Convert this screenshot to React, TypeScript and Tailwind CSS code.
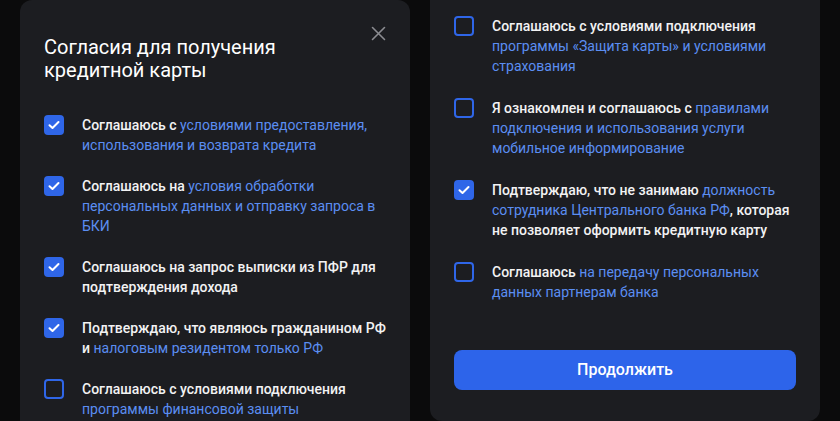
import React from 'react';

type Part = { t: string; link?: boolean };
type Item = { checked: boolean; parts: Part[] };

const leftItems: Item[] = [
  {
    checked: true,
    parts: [
      { t: 'Соглашаюсь с ' },
      { t: 'условиями предоставления, использования и возврата кредита', link: true },
    ],
  },
  {
    checked: true,
    parts: [
      { t: 'Соглашаюсь на ' },
      { t: 'условия обработки персональных данных и отправку запроса в БКИ', link: true },
    ],
  },
  {
    checked: true,
    parts: [{ t: 'Соглашаюсь на запрос выписки из ПФР для подтверждения дохода' }],
  },
  {
    checked: true,
    parts: [
      { t: 'Подтверждаю, что являюсь гражданином РФ и ' },
      { t: 'налоговым резидентом только РФ', link: true },
    ],
  },
  {
    checked: false,
    parts: [
      { t: 'Соглашаюсь с условиями подключения ' },
      { t: 'программы финансовой защиты', link: true },
    ],
  },
];

const rightItems: Item[] = [
  {
    checked: false,
    parts: [
      { t: 'Соглашаюсь с условиями подключения ' },
      { t: 'программы «Защита карты» и условиями страхования', link: true },
    ],
  },
  {
    checked: false,
    parts: [
      { t: 'Я ознакомлен и соглашаюсь с ' },
      { t: 'правилами подключения и использования услуги мобильное информирование', link: true },
    ],
  },
  {
    checked: true,
    parts: [
      { t: 'Подтверждаю, что не занимаю ' },
      { t: 'должность сотрудника Центрального банка РФ', link: true },
      { t: ', которая не позволяет оформить кредитную карту' },
    ],
  },
  {
    checked: false,
    parts: [
      { t: 'Соглашаюсь ' },
      { t: 'на передачу персональных данных партнерам банка', link: true },
    ],
  },
];

const Checkbox: React.FC<{ checked: boolean }> = ({ checked }) =>
  checked ? (
    <span className="flex h-5 w-5 shrink-0 items-center justify-center rounded-[4px] bg-[#2f66e8]">
      <svg width="12" height="10" viewBox="0 0 12 10" fill="none">
        <path d="M1.5 5.2L4.5 8L10.5 2" stroke="white" strokeWidth="2" strokeLinecap="round" strokeLinejoin="round" />
      </svg>
    </span>
  ) : (
    <span className="h-5 w-5 shrink-0 rounded-[4px] border-2 border-[#2f66e8]" />
  );

const ConsentRow: React.FC<{ item: Item }> = ({ item }) => (
  <div className="flex gap-[18px]">
    <Checkbox checked={item.checked} />
    <p className="text-[14px] leading-[20px] font-medium text-[#f2f2f3]">
      {item.parts.map((p, i) => (
        <span key={i} className={p.link ? 'font-normal text-[#5b8ef2]' : ''}>
          {p.t}
        </span>
      ))}
    </p>
  </div>
);

export default function App() {
  return (
    <div
      className="flex h-[421px] w-[840px] gap-5 overflow-hidden bg-[#0b0b0c] px-5"
      style={{ fontFamily: 'Roboto, "Noto Sans", sans-serif' }}
    >
      {/* left modal */}
      <div className="flex w-[390px] shrink-0 flex-col self-start rounded-[12px] bg-[#1c1d21] px-6 pt-[36px] pb-10">
        <div className="flex items-start justify-between">
          <h2 className="text-[20px] leading-[23px] font-normal text-white">
            Согласия для получения
            <br />
            кредитной карты
          </h2>
          <button className="mt-[-14px] mr-[-4px] p-1 text-[#8b8c91]">
            <svg width="15" height="15" viewBox="0 0 15 15" fill="none">
              <path d="M1.5 1.5L13.5 13.5M13.5 1.5L1.5 13.5" stroke="currentColor" strokeWidth="1.6" strokeLinecap="round" />
            </svg>
          </button>
        </div>
        <div className="mt-[33px] flex flex-col gap-[21px]">
          {leftItems.map((it, i) => (
            <ConsentRow key={i} item={it} />
          ))}
        </div>
      </div>

      {/* right modal */}
      <div className="flex w-[390px] shrink-0 flex-col self-end rounded-[12px] bg-[#1c1d21] px-6 pt-[40px] pb-[31px]">
        <div className="flex flex-col gap-[22px]">
          {rightItems.map((it, i) => (
            <ConsentRow key={i} item={it} />
          ))}
        </div>
        <button className="mt-[48px] h-10 w-full rounded-[8px] bg-[#2d64ea] text-[16px] font-medium text-white">
          Продолжить
        </button>
      </div>
    </div>
  );
}
